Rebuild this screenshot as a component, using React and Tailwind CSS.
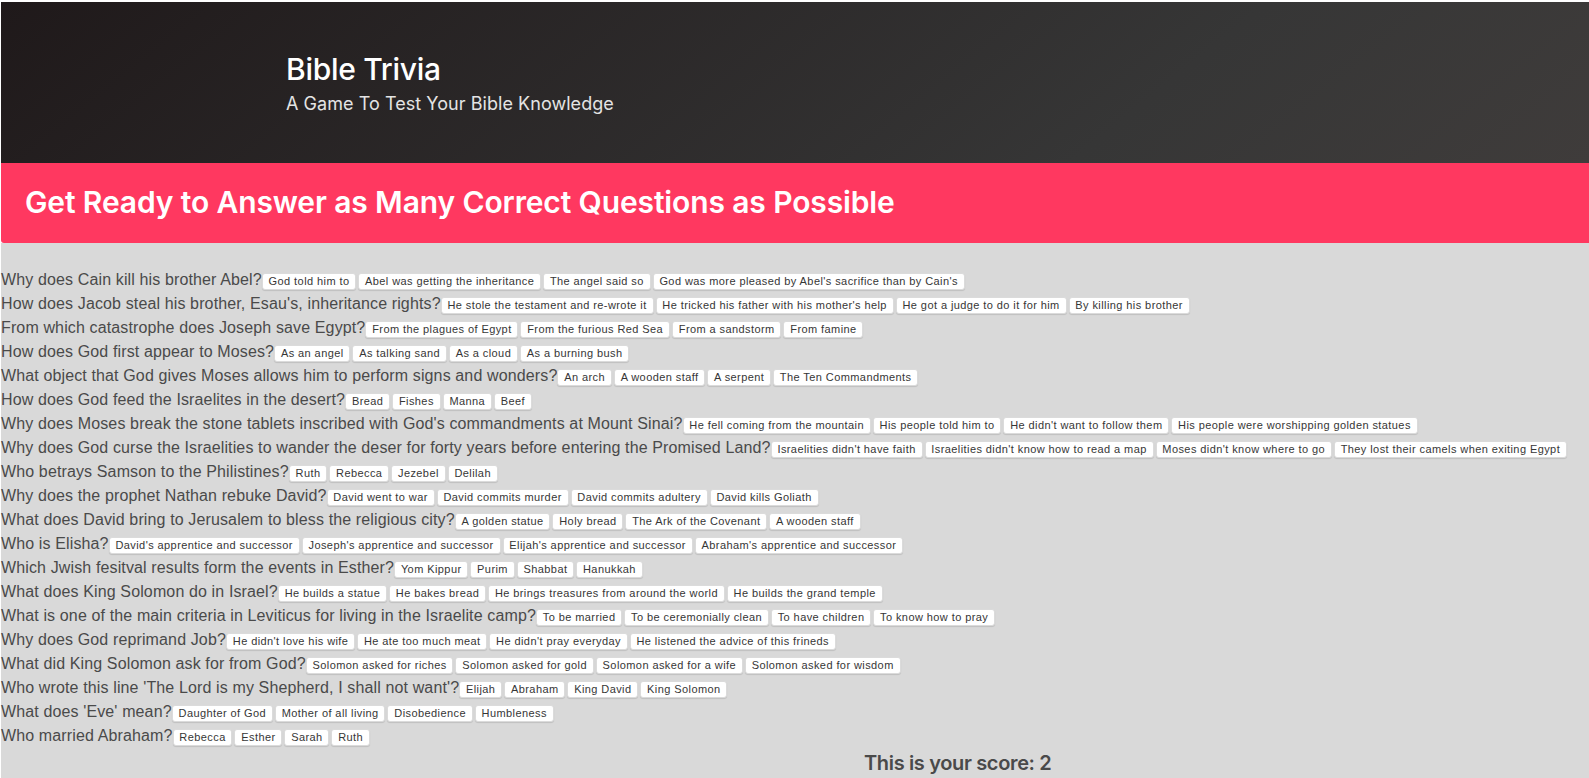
const questions = [
  ["Why does Cain kill his brother Abel?", ["God told him to", "Abel was getting the inheritance", "The angel said so", "God was more pleased by Abel's sacrifice than by Cain's"]],
  ["How does Jacob steal his brother, Esau's, inheritance rights?", ["He stole the testament and re-wrote it", "He tricked his father with his mother's help", "He got a judge to do it for him", "By killing his brother"]],
  ["From which catastrophe does Joseph save Egypt?", ["From the plagues of Egypt", "From the furious Red Sea", "From a sandstorm", "From famine"]],
  ["How does God first appear to Moses?", ["As an angel", "As talking sand", "As a cloud", "As a burning bush"]],
  ["What object that God gives Moses allows him to perform signs and wonders?", ["An arch", "A wooden staff", "A serpent", "The Ten Commandments"]],
  ["How does God feed the Israelites in the desert?", ["Bread", "Fishes", "Manna", "Beef"]],
  ["Why does Moses break the stone tablets inscribed with God's commandments at Mount Sinai?", ["He fell coming from the mountain", "His people told him to", "He didn't want to follow them", "His people were worshipping golden statues"]],
  ["Why does God curse the Israelities to wander the deser for forty years before entering the Promised Land?", ["Israelities didn't have faith", "Israelities didn't know how to read a map", "Moses didn't know where to go", "They lost their camels when exiting Egypt"]],
  ["Who betrays Samson to the Philistines?", ["Ruth", "Rebecca", "Jezebel", "Delilah"]],
  ["Why does the prophet Nathan rebuke David?", ["David went to war", "David commits murder", "David commits adultery", "David kills Goliath"]],
  ["What does David bring to Jerusalem to bless the religious city?", ["A golden statue", "Holy bread", "The Ark of the Covenant", "A wooden staff"]],
  ["Who is Elisha?", ["David's apprentice and successor", "Joseph's apprentice and successor", "Elijah's apprentice and successor", "Abraham's apprentice and successor"]],
  ["Which Jwish fesitval results form the events in Esther?", ["Yom Kippur", "Purim", "Shabbat", "Hanukkah"]],
  ["What does King Solomon do in Israel?", ["He builds a statue", "He bakes bread", "He brings treasures from around the world", "He builds the grand temple"]],
  ["What is one of the main criteria in Leviticus for living in the Israelite camp?", ["To be married", "To be ceremonially clean", "To have children", "To know how to pray"]],
  ["Why does God reprimand Job?", ["He didn't love his wife", "He ate too much meat", "He didn't pray everyday", "He listened the advice of this frineds"]],
  ["What did King Solomon ask for from God?", ["Solomon asked for riches", "Solomon asked for gold", "Solomon asked for a wife", "Solomon asked for wisdom"]],
  ["Who wrote this line 'The Lord is my Shepherd, I shall not want'?", ["Elijah", "Abraham", "King David", "King Solomon"]],
  ["What does 'Eve' mean?", ["Daughter of God", "Mother of all living", "Disobedience", "Humbleness"]],
  ["Who married Abraham?", ["Rebecca", "Esther", "Sarah", "Ruth"]],
];

function App() {
  return (
    <div className="h-[778px] overflow-hidden bg-white pt-[2px] pl-[1px] font-['Inter',sans-serif]">
      <section className="h-[161px] bg-[linear-gradient(141deg,#1f191a_0%,#363636_71%,#3f3c3b_100%)] pt-[47px] pl-[285px]">
        <h1 className="text-[30px] leading-[40px] font-medium tracking-[-0.3px] text-white">Bible Trivia</h1>
        <h2 className="pt-[1px] text-[18px] leading-[27px] tracking-[0.05px] text-[#e4e4e4]">A Game To Test Your Bible Knowledge</h2>
      </section>
      <div className="h-[80px] rounded-bl-[3px] bg-[#ff3860] pl-[24px] flex items-center">
        <p className="pb-[2px] text-[30px] font-semibold tracking-[-0.125px] text-white">Get Ready to Answer as Many Correct Questions as Possible</p>
      </div>
      <div className="h-full bg-[#d9d9d9] pt-[25px] text-[#4a4a4a]">
        {questions.map(([q, answers]) => (
          <div key={q} className="flex h-[24px] items-center whitespace-nowrap font-['Liberation_Sans',sans-serif] text-[16px]">
            <span className="pb-[1px] tracking-[0.13px]">{q}</span>
            <div className="flex gap-[2px] pt-[2px]">
              {answers.map((a) => (
                <button key={a} className="h-[17px] rounded-[3px] border border-[#dbdbdb] bg-white px-[5.8px] text-[11px] leading-none tracking-[0.416px] text-[#363636] shadow-[0_1px_1px_rgba(0,0,0,0.12)]">{a}</button>
              ))}
            </div>
          </div>
        ))}
        <p className="pl-[863px] text-[20px] font-semibold leading-[30px] tracking-[-0.35px]">This is your score: 2</p>
      </div>
    </div>
  );
}

export default App;
